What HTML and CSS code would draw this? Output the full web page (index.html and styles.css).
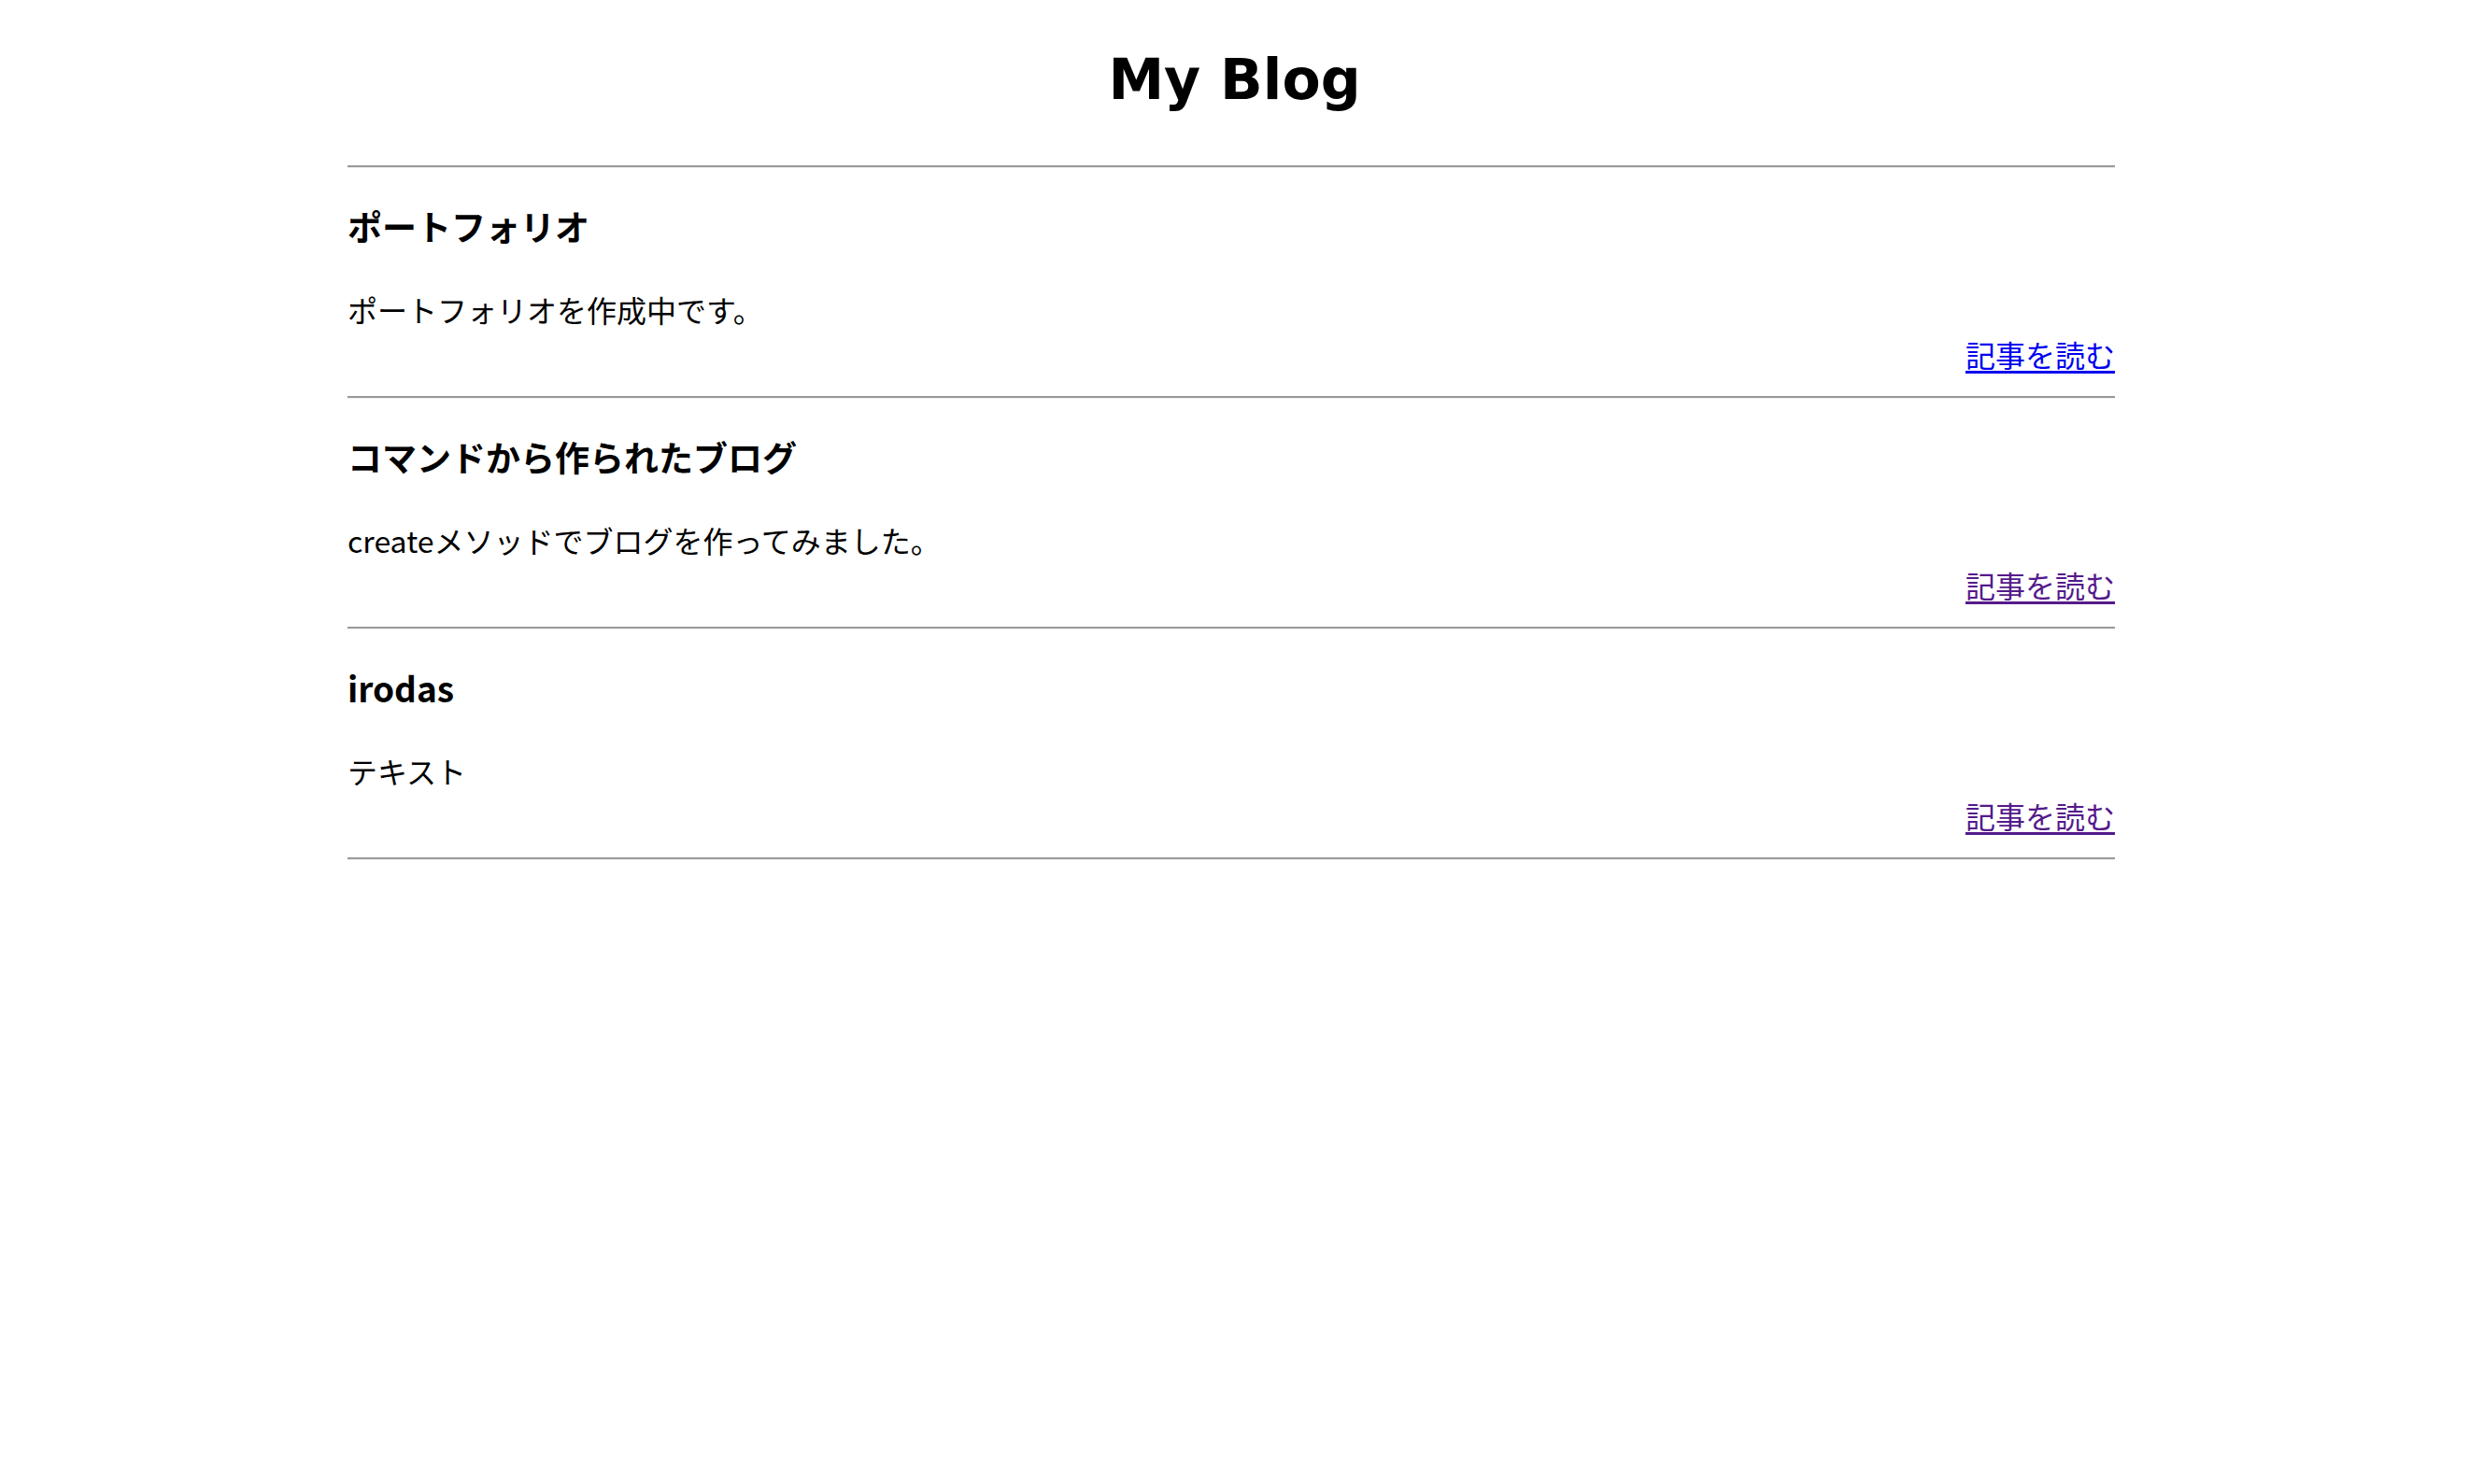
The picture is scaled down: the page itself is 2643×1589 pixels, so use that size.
FILE: index.html
```html
<!DOCTYPE html>
<html lang="ja">
<head>
<meta charset="utf-8">
<title>My Blog</title>
<link rel="stylesheet" href="styles.css">
</head>
<body>
<header class="site-header">
  <h1 class="site-title">My Blog</h1>
</header>
<main class="posts">
  <hr class="rule">
  <article class="post">
    <h2 class="post-title">ポートフォリオ</h2>
    <p class="post-body">ポートフォリオを作成中です。</p>
    <div class="post-more"><a class="more-link" href="#post1">記事を読む</a></div>
  </article>
  <hr class="rule">
  <article class="post">
    <h2 class="post-title">コマンドから作られたブログ</h2>
    <p class="post-body">createメソッドでブログを作ってみました。</p>
    <div class="post-more"><a class="more-link visited" href="#post2">記事を読む</a></div>
  </article>
  <hr class="rule">
  <article class="post">
    <h2 class="post-title">irodas</h2>
    <p class="post-body">テキスト</p>
    <div class="post-more"><a class="more-link visited" href="#post3">記事を読む</a></div>
  </article>
  <hr class="rule">
</main>
</body>
</html>
```

FILE: styles.css
```css
html, body {
  margin: 0;
  padding: 0;
  background: #ffffff;
  color: #000000;
}

body {
  font-family: "Noto Sans CJK JP", "DejaVu Sans", sans-serif;
}

.site-header {
  padding-top: 54px;
}

.site-title {
  margin: 0;
  font-family: "DejaVu Sans", "Noto Sans CJK JP", sans-serif;
  font-weight: bold;
  font-size: 60px;
  line-height: 62px;
  text-align: center;
}

.posts {
  width: 1892px;
  margin: 61px 0 0 372px;
}

.rule {
  margin: 0;
  height: 0;
  border: none;
  border-top: 2px solid #9a9a9a;
  border-bottom: 1px solid #eeeeee;
}

.post {
  padding: 44px 0 29px;
}

.post-title {
  margin: 0;
  font-family: "Noto Sans CJK JP", "DejaVu Sans", sans-serif;
  font-weight: bold;
  font-size: 37px;
  line-height: 37px;
}

.post-body {
  margin: 54px 0 0;
  font-size: 32px;
  line-height: 32px;
}

.post-more {
  margin-top: 16px;
  text-align: right;
  font-size: 32px;
  line-height: 32px;
}

.more-link {
  color: #0000ee;
  text-decoration: underline;
  text-decoration-thickness: 3px;
  text-underline-offset: 4px;
}

.more-link.visited {
  color: #551a8b;
}
```
